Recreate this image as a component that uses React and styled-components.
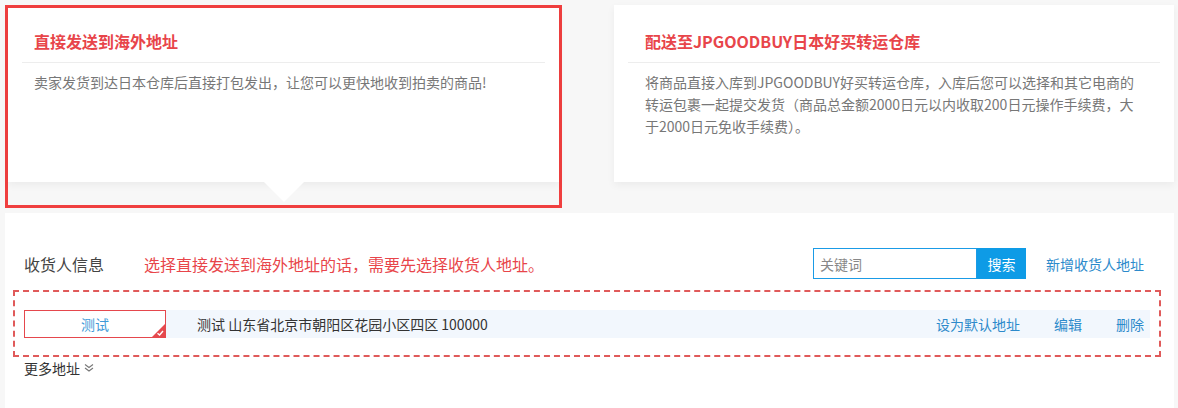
import React from "react"
import styled, { createGlobalStyle } from "styled-components"

const GlobalStyle = createGlobalStyle`
  body {
    margin: 0;
    background: #f7f7f7;
    font-family: "Noto Sans CJK SC", "Noto Sans", sans-serif;
  }
`

const Page = styled.div`
  padding: 5px 4px 0 5px;
`

const TopRow = styled.div`
  display: flex;
  justify-content: space-between;
  align-items: flex-start;
`

const SelectedFrame = styled.div`
  width: 557px;
  box-sizing: border-box;
  border: 3px solid #f03f3f;
  padding-bottom: 23px;
`

const Card = styled.div`
  --inset: ${props => (props.$selected ? "12px" : "17px")};
  position: relative;
  box-sizing: border-box;
  width: ${props => (props.$selected ? "100%" : "560px")};
  height: ${props => (props.$selected ? "174px" : "177px")};
  padding: ${props => (props.$selected ? "21px 14px 0" : "24px 14px 0")};
  background: #fff;
  box-shadow: 0 3px 8px rgba(0, 0, 0, 0.05);

  ${props =>
    props.$selected &&
    `
    &::after {
      content: "";
      position: absolute;
      left: 50%;
      top: 100%;
      margin-left: -20px;
      border-left: 20px solid transparent;
      border-right: 20px solid transparent;
      border-top: 20px solid #fff;
    }
  `}
`

const CardHead = styled.div`
  padding-bottom: 9px;
  border-bottom: 1px solid #ededed;
`

const CardTitle = styled.h2`
  margin: 0;
  padding: 0 var(--inset);
  font-size: 16px;
  font-weight: bold;
  line-height: 24px;
  color: #e8454a;
`

const CardText = styled.p`
  margin: 8px 0 0;
  padding: 0 18px 0 var(--inset);
  font-size: 14px;
  line-height: 22px;
  color: #777;
`

const Panel = styled.div`
  margin-top: 5px;
  min-height: 160px;
  padding: 35px 13px 0 8px;
  background: #fff;
`

const PanelHead = styled.div`
  display: flex;
  align-items: center;
  height: 31px;
  padding: 0 17px 0 11px;
`

const SectionTitle = styled.span`
  font-size: 16px;
  line-height: 22px;
  color: #444;
`

const Notice = styled.span`
  margin-left: 40px;
  font-size: 16px;
  line-height: 22px;
  color: #e8454a;
`

const SearchBox = styled.div`
  display: flex;
  margin-left: auto;
`

const SearchInput = styled.input`
  box-sizing: border-box;
  width: 164px;
  height: 31px;
  padding: 0 6px;
  border: 1px solid #1a9be6;
  outline: none;
  font-family: inherit;
  font-size: 14px;
  color: #333;

  &::placeholder {
    color: #888;
  }
`

const SearchButton = styled.button`
  width: 49px;
  height: 31px;
  border: none;
  background: #0e9be6;
  color: #fff;
  font-family: inherit;
  font-size: 14px;
  padding: 0;
`

const TextLink = styled.a`
  margin-left: ${props => props.$gap || "34px"};
  font-size: 14px;
  line-height: 20px;
  color: #2c8acb;
  text-decoration: none;
  cursor: pointer;
`

const AddressBox = styled.div`
  margin-top: 11px;
  border: 2px dashed #e05a5a;
  padding: 18px 9px 17px;
`

const AddressRow = styled.div`
  display: flex;
  align-items: center;
  height: 28px;
  padding-right: 6px;
  background: #f2f7fd;
`

const NameTag = styled.div`
  position: relative;
  box-sizing: border-box;
  width: 142px;
  height: 28px;
  display: flex;
  align-items: center;
  justify-content: center;
  border: 1px solid #e5484d;
  background: #fff;
  font-size: 14px;
  color: #3d9ad8;
`

const CornerMark = styled.svg`
  position: absolute;
  right: 0;
  bottom: 0;
`

const AddressText = styled.span`
  margin-left: 31px;
  margin-right: auto;
  font-size: 14px;
  line-height: 20px;
  color: #333;
`

const MoreLink = styled.div`
  display: flex;
  align-items: center;
  gap: 4px;
  margin-top: 1px;
  padding-left: 11px;
  font-size: 14px;
  line-height: 20px;
  color: #333;
`

export default function App() {
  return (
    <Page>
      <GlobalStyle />
      <TopRow>
        <SelectedFrame>
          <Card $selected>
            <CardHead>
              <CardTitle>直接发送到海外地址</CardTitle>
            </CardHead>
            <CardText>
              卖家发货到达日本仓库后直接打包发出，让您可以更快地收到拍卖的商品!
            </CardText>
          </Card>
        </SelectedFrame>

        <Card>
          <CardHead>
            <CardTitle>配送至JPGOODBUY日本好买转运仓库</CardTitle>
          </CardHead>
          <CardText>
            将商品直接入库到JPGOODBUY好买转运仓库，入库后您可以选择和其它电商的转运包裹一起提交发货（商品总金额2000日元以内收取200日元操作手续费，大于2000日元免收手续费）。
          </CardText>
        </Card>
      </TopRow>

      <Panel>
        <PanelHead>
          <SectionTitle>收货人信息</SectionTitle>
          <Notice>选择直接发送到海外地址的话，需要先选择收货人地址。</Notice>
          <SearchBox>
            <SearchInput placeholder="关键词" />
            <SearchButton>搜索</SearchButton>
          </SearchBox>
          <TextLink $gap="20px">新增收货人地址</TextLink>
        </PanelHead>

        <AddressBox>
          <AddressRow>
            <NameTag>
              测试
              <CornerMark width="13" height="13" viewBox="0 0 13 13">
                <path d="M13 0 L13 13 L0 13 Z" fill="#e5484d" />
                <polyline
                  points="5.5,9.2 7.6,11 11,7"
                  fill="none"
                  stroke="#fff"
                  strokeWidth="1.4"
                />
              </CornerMark>
            </NameTag>
            <AddressText>测试 山东省北京市朝阳区花园小区四区 100000</AddressText>
            <TextLink>设为默认地址</TextLink>
            <TextLink>编辑</TextLink>
            <TextLink>删除</TextLink>
          </AddressRow>
        </AddressBox>

        <MoreLink>
          更多地址
          <svg width="10" height="10" viewBox="0 0 10 10">
            <polyline points="1,1.5 5,4.5 9,1.5" fill="none" stroke="#777" strokeWidth="1.1" />
            <polyline points="1,5 5,8 9,5" fill="none" stroke="#777" strokeWidth="1.1" />
          </svg>
        </MoreLink>
      </Panel>
    </Page>
  )
}
